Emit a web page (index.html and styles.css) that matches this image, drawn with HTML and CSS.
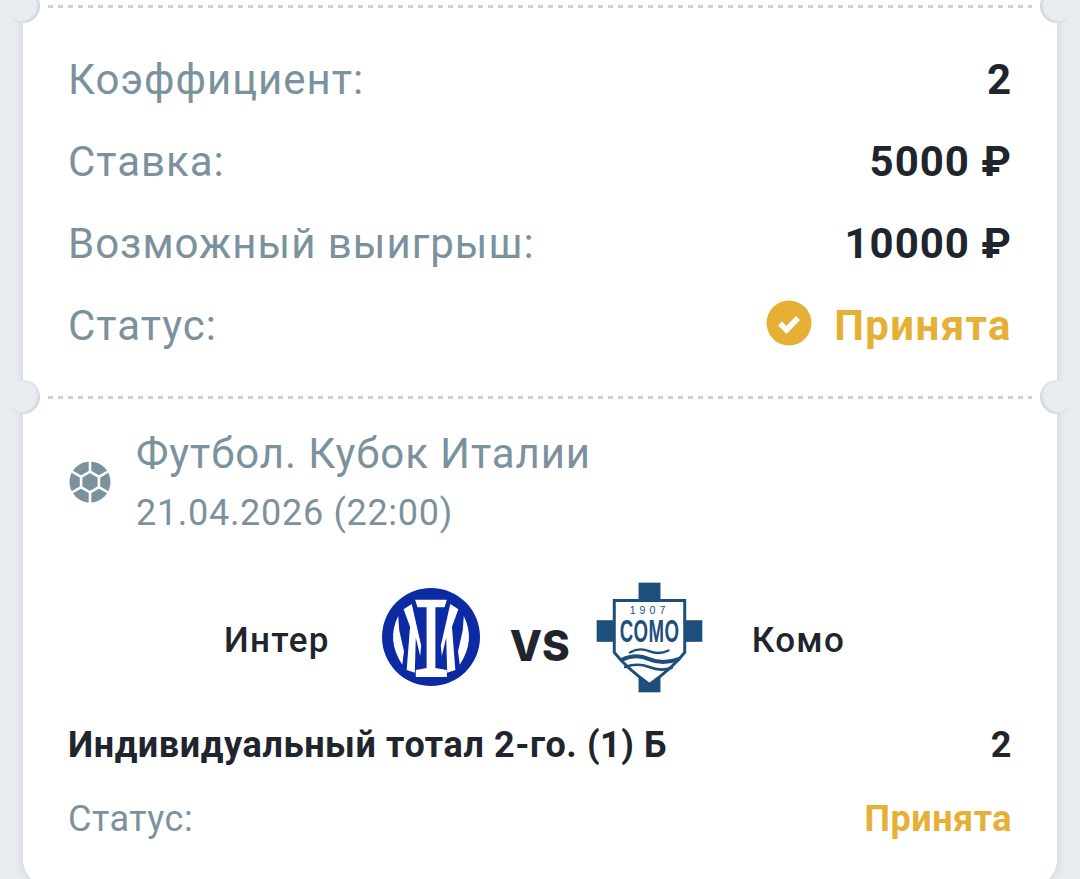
FILE: index.html
```html
<!DOCTYPE html>
<html lang="ru">
<head>
    <meta charset="UTF-8">
    <meta name="viewport" content="width=device-width, initial-scale=1.0">
    <title>Купон</title>
    <link rel="stylesheet" href="styles.css">
</head>
<body>

<div class="ticket">
    <div class="tear"></div>

    <div class="summary">
        <div class="row">
            <span class="label">Коэффициент:</span>
            <span class="value">2</span>
        </div>
        <div class="row">
            <span class="label">Ставка:</span>
            <span class="value">5000 ₽</span>
        </div>
        <div class="row">
            <span class="label">Возможный выигрыш:</span>
            <span class="value">10000 ₽</span>
        </div>
        <div class="row">
            <span class="label">Статус:</span>
            <span class="value status">
                <svg class="status-icon" viewBox="0 0 46 46">
                    <circle cx="23" cy="23" r="22.5" fill="#e5b035"/>
                    <path d="M14 23.5l6.5 6.5L32 18" fill="none" stroke="#fff" stroke-width="5.5"/>
                </svg>
                Принята
            </span>
        </div>
    </div>

    <div class="tear"></div>

    <div class="event">
        <div class="event-head">
            <svg class="sport-icon" viewBox="0 0 42 42">
                <circle cx="21" cy="21" r="20.5" fill="#7b929e"/>
                <g stroke="#fff" stroke-width="2.6" fill="none">
                    <path d="M21 10.7L29.9 15.85V26.15L21 31.3L12.1 26.15V15.85Z"/>
                    <path d="M21 10.7V0M29.9 15.85L40 10M29.9 26.15L40 32M21 31.3V42M12.1 26.15L2 32M12.1 15.85L2 10"/>
                </g>
            </svg>
            <div class="event-info">
                <div class="event-title">Футбол. Кубок Италии</div>
                <div class="event-date">21.04.2026 (22:00)</div>
            </div>
        </div>

        <div class="match">
            <span class="team team-home">Интер</span>
            <svg class="logo-inter" viewBox="20 25 290 290">
                <circle cx="165" cy="170" r="145" fill="#0b2aa3"/>
                <g fill="#fff">
                    <path d="M118 60H212L205 82H178V262L212 268V288H120V268L152 262V82H125Z"/>
                    <path d="M84 88L108 72L136 196L133 226L120 172L117 276L93 268L103 140Z"/>
                    <path d="M246 88L222 72L194 196L197 226L210 172L213 276L237 268L227 140Z"/>
                    <path d="M68 108Q32 180 80 252L85 212L71 150Z"/>
                    <path d="M262 108Q298 180 250 252L245 212L259 150Z"/>
                </g>
            </svg>
            <span class="versus">VS</span>
            <svg class="logo-como" viewBox="20 20 322 334">
                <g fill="#1d4e7c">
                    <rect x="148" y="22" width="66" height="330"/>
                    <rect x="22" y="135" width="318" height="65"/>
                </g>
                <path d="M75 76H287V232Q250 280 181 328Q112 280 75 232Z" fill="#fff" stroke="#1d4e7c" stroke-width="9"/>
                <text class="como-year" x="181" y="116" text-anchor="middle">1907</text>
                <text class="como-name" transform="translate(181 200) scale(.61 1)" text-anchor="middle">COMO</text>
                <g fill="none" stroke="#1d4e7c" stroke-linecap="round">
                    <path d="M122 232Q150 216 180 228T238 226" stroke-width="7"/>
                    <path d="M98 254Q140 234 180 252T268 252" stroke-width="12"/>
                    <path d="M108 276Q145 262 180 276T248 278" stroke-width="8"/>
                </g>
            </svg>
            <span class="team team-away">Комо</span>
        </div>

        <div class="market">
            <span>Индивидуальный тотал 2-го. (1) Б</span>
            <span>2</span>
        </div>
        <div class="bet-status">
            <span class="bet-label">Статус:</span>
            <span class="bet-value">Принята</span>
        </div>
    </div>
</div>

</body>
</html>
```

FILE: styles.css
```css
html, body {
    height: 879px;
    overflow: hidden;
}

body {
    margin: 0;
    background-color: #e9edf2;
    font-family: Roboto, "Liberation Sans", sans-serif;
    color: #1f252c;
}

.ticket {
    margin: 0 23px;
    background-color: #fff;
    border-radius: 0 0 26px 26px;
    box-shadow: 0 0 9px rgba(90, 105, 120, 0.25);
    height: 886px;
}

.tear {
    position: relative;
    height: 12px;
    margin: 0 25px;
    background-image: repeating-linear-gradient(to right, #cfd1d3 0, #cfd1d3 5px, transparent 5px, transparent 10px);
    background-size: 100% 3px;
    background-position: 0 center;
    background-repeat: no-repeat;
}

.tear::before,
.tear::after {
    content: "";
    position: absolute;
    top: -11px;
    width: 34px;
    height: 34px;
    border-radius: 50%;
    background-color: #e9edf2;
}

.tear::before {
    left: -42px;
    box-shadow: inset -2px -1px 3px rgba(90, 105, 120, 0.2);
}

.tear::after {
    right: -42px;
    box-shadow: inset 2px -1px 3px rgba(90, 105, 120, 0.2);
}

.summary {
    padding: 26px 45px 25px;
}

.row {
    display: flex;
    justify-content: space-between;
    align-items: center;
    height: 82px;
    font-size: 42px;
    letter-spacing: 1px;
}

.label {
    color: #7b929e;
}

.value {
    font-weight: 700;
}

.status {
    display: flex;
    align-items: center;
    gap: 22px;
    color: #e5b035;
    letter-spacing: 1.4px;
}

.status-icon {
    width: 46px;
    height: 46px;
    margin-top: -4px;
}

.event {
    padding: 23px 45px 0;
}

.event-head {
    display: flex;
    align-items: center;
    gap: 25px;
}

.sport-icon {
    width: 42px;
    height: 42px;
    margin: 0 0 7px 1px;
}

.event-info {
    color: #7b929e;
}

.event-title {
    font-size: 42px;
    line-height: 56px;
    letter-spacing: 0.9px;
}

.event-date {
    font-size: 36px;
    line-height: 62px;
    letter-spacing: 0.7px;
}

.match {
    display: flex;
    align-items: center;
    margin-top: 40px;
    height: 112px;
    font-size: 35px;
    font-weight: 500;
    letter-spacing: 1.3px;
}

.team-home {
    margin-left: 156px;
}

.logo-inter {
    width: 98px;
    height: 98px;
    margin: -6px 0 0 52px;
}

.versus {
    margin: 10px 0 0 30px;
    font-size: 42px;
    font-weight: 800;
    letter-spacing: 0;
    font-family: Inter, Roboto, sans-serif;
}

.logo-como {
    width: 107px;
    height: 111px;
    margin: -6px 0 0 26px;
}

.team-away {
    margin-left: 49px;
}

.como-year {
    font: 400 32px "Liberation Sans", sans-serif;
    letter-spacing: 12px;
    fill: #1d4e7c;
}

.como-name {
    font: 700 92px "Liberation Sans", sans-serif;
    letter-spacing: 2px;
    fill: #1d4e7c;
}

.market {
    display: flex;
    justify-content: space-between;
    align-items: center;
    margin-top: 24px;
    height: 50px;
    font-size: 36px;
    font-weight: 700;
    letter-spacing: 0.6px;
}

.bet-status {
    display: flex;
    justify-content: space-between;
    align-items: center;
    margin-top: 24px;
    height: 50px;
    font-size: 36px;
    letter-spacing: 0.5px;
}

.bet-label {
    color: #7b929e;
}

.bet-value {
    color: #e5b035;
    font-weight: 700;
}
```
